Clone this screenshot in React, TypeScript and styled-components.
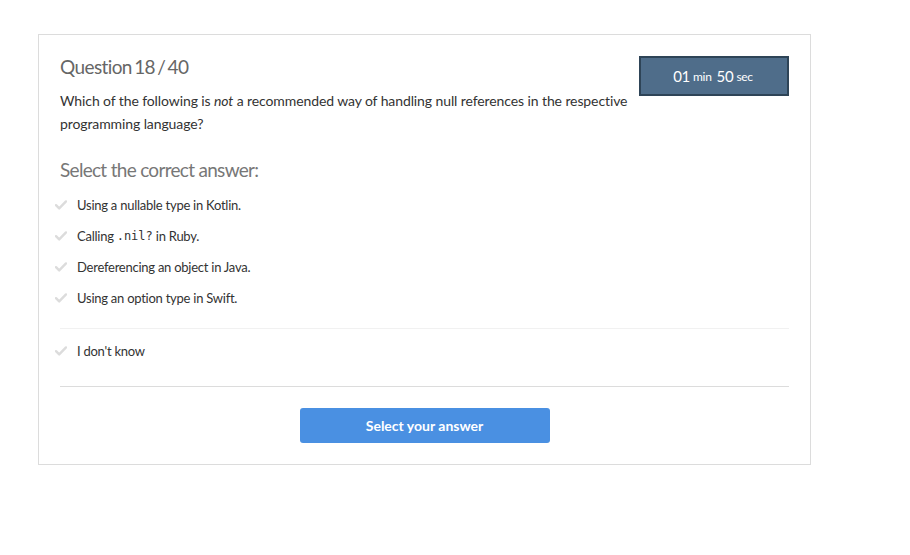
import React from "react";
import styled, { createGlobalStyle } from "styled-components";

const GlobalStyle = createGlobalStyle`
  html, body { margin: 0; padding: 0; background: #fff; }
  body { font-family: Lato, "Open Sans", sans-serif; color: #333; }
`;

const Page = styled.div`
  padding: 34px 0 0 38px;
`;

const Card = styled.div`
  box-sizing: border-box;
  width: 773px;
  height: 431px;
  border: 1px solid #dcdcdc;
  padding: 20px 21px 0 21px;
  display: flex;
  flex-direction: column;
`;

const Header = styled.div`
  display: flex;
  justify-content: space-between;
  align-items: flex-start;
`;

const HeaderText = styled.div`
  display: flex;
  flex-direction: column;
`;

const Title = styled.h2`
  margin: 0;
  font-size: 19px;
  font-weight: 400;
  line-height: 24px;
  color: #666;
  letter-spacing: -0.6px;
  word-spacing: -2px;
`;

const Question = styled.p`
  margin: 10px 0 0 0;
  width: 575px;
  font-size: 14px;
  line-height: 23px;
  color: #333;
  letter-spacing: -0.1px;
`;

const Timer = styled.div`
  box-sizing: border-box;
  width: 150px;
  height: 40px;
  margin-top: 1px;
  background: #4f6d8a;
  border: 2px solid #2e4457;
  color: #fff;
  display: flex;
  align-items: center;
  justify-content: center;
  gap: 3px;
  font-size: 15px;
  letter-spacing: -0.3px;
`;

const Unit = styled.span`
  font-size: 12px;
  margin-right: 2px;
`;

const SubTitle = styled.h3`
  margin: 23px 0 0 0;
  font-size: 19px;
  font-weight: 400;
  line-height: 24px;
  color: #777;
  letter-spacing: -0.7px;
`;

const Options = styled.ul<{ $top: number }>`
  list-style: none;
  margin: ${(p) => p.$top}px 0 0 0;
  padding: 0;
  display: flex;
  flex-direction: column;
`;

const Option = styled.li`
  display: flex;
  align-items: center;
  height: 31px;
  font-size: 13px;
  color: #333;
  letter-spacing: -0.25px;
`;

const Check = styled.svg`
  width: 12px;
  height: 10px;
  margin-left: -5px;
  margin-right: 10px;
  flex: none;
`;

const Code = styled.code`
  font-family: "DejaVu Sans Mono", "Liberation Mono", monospace;
  font-size: 12px;
  letter-spacing: 0;
  margin: 0 3px;
`;

const Rule = styled.hr<{ $light?: boolean; $top: number }>`
  margin: ${(p) => p.$top}px 0 0 0;
  border: 0;
  border-top: 1px solid ${(p) => (p.$light ? "#f1f1f1" : "#dcdcdc")};
`;

const Footer = styled.div`
  display: flex;
  justify-content: center;
  padding-top: 21px;
`;

const Button = styled.button`
  width: 250px;
  height: 35px;
  background: #4a90e2;
  border: none;
  border-radius: 3px;
  color: #fff;
  font-family: Lato, sans-serif;
  font-weight: 700;
  font-size: 14px;
  cursor: pointer;
`;

const CheckIcon = () => (
  <Check viewBox="0 0 12 10">
    <path d="M1 5.2 L4.2 8.4 L11 1.4" fill="none" stroke="#dcdcdc" strokeWidth="2.4" strokeLinecap="round" strokeLinejoin="round" />
  </Check>
);

export default function App() {
  return (
    <>
      <GlobalStyle />
      <Page>
        <Card>
          <Header>
            <HeaderText>
              <Title>Question 18 / 40</Title>
              <Question>
                Which of the following is <em>not</em> a recommended way of handling null references in the respective programming language?
              </Question>
            </HeaderText>
            <Timer>
              01 <Unit>min</Unit> 50 <Unit>sec</Unit>
            </Timer>
          </Header>
          <SubTitle>Select the correct answer:</SubTitle>
          <Options $top={7}>
            <Option><CheckIcon />Using a nullable type in Kotlin.</Option>
            <Option><CheckIcon />Calling<Code>.nil?</Code>in Ruby.</Option>
            <Option><CheckIcon />Dereferencing an object in Java.</Option>
            <Option><CheckIcon />Using an option type in Swift.</Option>
          </Options>
          <Rule $light $top={15} />
          <Options $top={6}>
            <Option><CheckIcon />I don't know</Option>
          </Options>
          <Rule $top={20} />
          <Footer>
            <Button>Select your answer</Button>
          </Footer>
        </Card>
      </Page>
    </>
  );
}
